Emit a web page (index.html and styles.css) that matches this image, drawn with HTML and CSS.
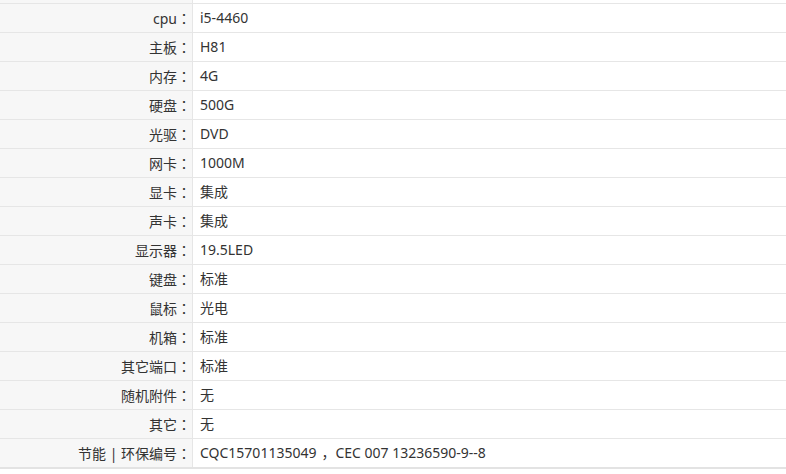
FILE: index.html
```html
<!DOCTYPE html>
<html lang="zh-CN">
<head>
<meta charset="utf-8">
<link rel="stylesheet" href="styles.css">
</head>
<body>
<div class="sheet">
  <div class="row ghost"><div class="k"></div><div class="v"></div></div>
  <div class="row"><div class="k">cpu<span class="p" lang="zh-TW">：</span></div><div class="v">i5-4460</div></div>
  <div class="row"><div class="k">主板<span class="p" lang="zh-TW">：</span></div><div class="v">H81</div></div>
  <div class="row"><div class="k">内存<span class="p" lang="zh-TW">：</span></div><div class="v">4G</div></div>
  <div class="row"><div class="k">硬盘<span class="p" lang="zh-TW">：</span></div><div class="v">500G</div></div>
  <div class="row"><div class="k">光驱<span class="p" lang="zh-TW">：</span></div><div class="v">DVD</div></div>
  <div class="row"><div class="k">网卡<span class="p" lang="zh-TW">：</span></div><div class="v">1000M</div></div>
  <div class="row"><div class="k">显卡<span class="p" lang="zh-TW">：</span></div><div class="v">集成</div></div>
  <div class="row"><div class="k">声卡<span class="p" lang="zh-TW">：</span></div><div class="v">集成</div></div>
  <div class="row"><div class="k">显示器<span class="p" lang="zh-TW">：</span></div><div class="v">19.5LED</div></div>
  <div class="row"><div class="k">键盘<span class="p" lang="zh-TW">：</span></div><div class="v">标准</div></div>
  <div class="row"><div class="k">鼠标<span class="p" lang="zh-TW">：</span></div><div class="v">光电</div></div>
  <div class="row"><div class="k">机箱<span class="p" lang="zh-TW">：</span></div><div class="v">标准</div></div>
  <div class="row"><div class="k">其它端口<span class="p" lang="zh-TW">：</span></div><div class="v">标准</div></div>
  <div class="row"><div class="k">随机附件<span class="p" lang="zh-TW">：</span></div><div class="v">无</div></div>
  <div class="row"><div class="k">其它<span class="p" lang="zh-TW">：</span></div><div class="v">无</div></div>
  <div class="row last"><div class="k">节能 | 环保编号<span class="p" lang="zh-TW">：</span></div><div class="v">CQC15701135049<span class="c">，</span>CEC 007 13236590-9--8</div></div>
</div>
</body>
</html>
```
FILE: styles.css
```css
html, body {
  margin: 0;
  padding: 0;
  background: #fff;
}
body {
  font-family: "Noto Sans", "Noto Sans CJK SC", sans-serif;
  font-size: 14px;
  color: #333;
}
.sheet {
  width: 786px;
  margin-top: -25px;
}
.row {
  display: flex;
  height: 28px;
  border-bottom: 1px solid #e6e6e6;
}
.row.last {
  border-bottom: 2px solid #e3e3e3;
}
.k {
  width: 191px;
  flex: none;
  background: #f7f7f7;
  border-right: 1px solid #e6e6e6;
  text-align: right;
  line-height: 28px;
  padding-right: 1px;
  white-space: nowrap;
}
.v {
  flex: 1;
  padding-left: 7px;
  line-height: 28px;
  white-space: nowrap;
}
.p {
  font-family: "Noto Sans CJK TC", sans-serif;
  font-feature-settings: "locl" 0;
}
.c {
  padding-left: 5px;
}
```
